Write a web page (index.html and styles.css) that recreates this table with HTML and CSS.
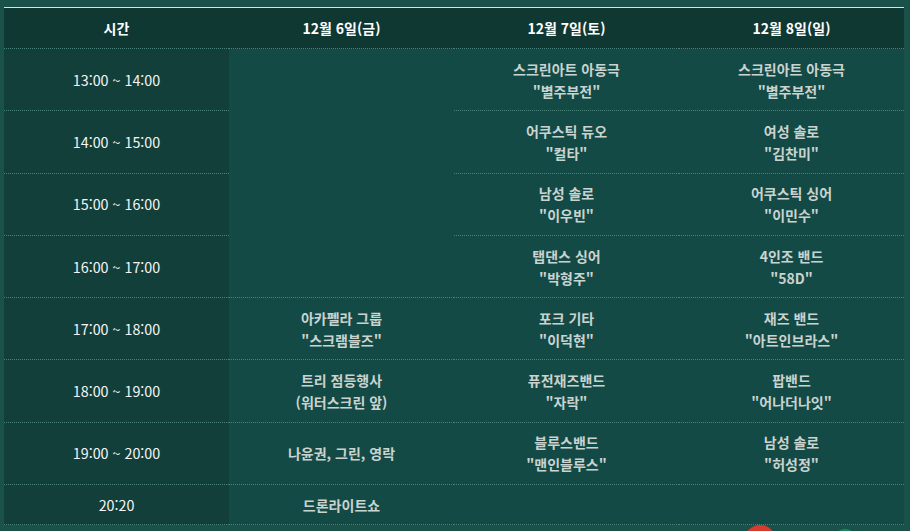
FILE: index.html
```html
<!DOCTYPE html>
<html lang="ko">
<head>
<meta charset="utf-8">
<link rel="stylesheet" href="styles.css">
</head>
<body>
<div class="page">
  <table class="schedule">
    <thead>
      <tr>
        <th>시간</th>
        <th>12월 6일(금)</th>
        <th>12월 7일(토)</th>
        <th>12월 8일(일)</th>
      </tr>
    </thead>
    <tbody>
      <tr>
        <td class="time">13:00 ~ 14:00</td>
        <td class="span" rowspan="4"></td>
        <td>스크린아트 아동극<br>"별주부전"</td>
        <td>스크린아트 아동극<br>"별주부전"</td>
      </tr>
      <tr>
        <td class="time">14:00 ~ 15:00</td>
        <td>어쿠스틱 듀오<br>"컬타"</td>
        <td>여성 솔로<br>"김찬미"</td>
      </tr>
      <tr>
        <td class="time">15:00 ~ 16:00</td>
        <td>남성 솔로<br>"이우빈"</td>
        <td>어쿠스틱 싱어<br>"이민수"</td>
      </tr>
      <tr>
        <td class="time">16:00 ~ 17:00</td>
        <td>탭댄스 싱어<br>"박형주"</td>
        <td>4인조 밴드<br>"58D"</td>
      </tr>
      <tr>
        <td class="time">17:00 ~ 18:00</td>
        <td>아카펠라 그룹<br>"스크램블즈"</td>
        <td>포크 기타<br>"이덕현"</td>
        <td>재즈 밴드<br>"아트인브라스"</td>
      </tr>
      <tr>
        <td class="time">18:00 ~ 19:00</td>
        <td>트리 점등행사<br>(워터스크린 앞)</td>
        <td>퓨전재즈밴드<br>"자락"</td>
        <td>팝밴드<br>"어나더나잇"</td>
      </tr>
      <tr>
        <td class="time">19:00 ~ 20:00</td>
        <td>나윤권, 그린, 영락</td>
        <td>블루스밴드<br>"맨인블루스"</td>
        <td>남성 솔로<br>"허성정"</td>
      </tr>
      <tr class="last">
        <td class="time">20:20</td>
        <td>드론라이트쇼</td>
        <td></td>
        <td></td>
      </tr>
    </tbody>
  </table>
  <span class="fab fab-red"></span>
  <span class="fab fab-green"></span>
</div>
</body>
</html>
```
FILE: styles.css
```css
html, body {
  margin: 0;
  padding: 0;
  background: #1a5149;
  height: 100%;
  overflow: hidden;
}
.page {
  position: relative;
  padding: 7px 6px 0 4px;
  height: 531px;
  box-sizing: border-box;
}
.schedule {
  width: 900px;
  border-collapse: collapse;
  table-layout: fixed;
  border-top: 1px solid #f2e3a4;
  font-family: "Noto Sans CJK KR", "Noto Sans", sans-serif;
  font-size: 14px;
}
.schedule th {
  height: 41px;
  padding: 0;
  background: #103833;
  color: #ffffff;
  font-weight: 700;
  text-align: center;
  border-bottom: 1px dotted #4b8279;
  box-sizing: border-box;
}
.schedule td {
  height: 62.3px;
  padding: 0;
  background: #144a45;
  color: #c9d3d0;
  font-weight: 700;
  text-align: center;
  line-height: 22px;
  border-bottom: 1px dotted #4b8279;
  box-sizing: border-box;
}
.schedule td.time {
  background: #133f3b;
  color: #f5f5f5;
  font-weight: 400;
  font-size: 14.3px;
}
.schedule tr.last td {
  height: 40px;
}
.fab {
  position: absolute;
  border-radius: 50%;
}
.fab-red {
  left: 744px;
  top: 525px;
  width: 32px;
  height: 32px;
  background: #d93a2e;
}
.fab-green {
  left: 833px;
  top: 529px;
  width: 24px;
  height: 24px;
  background: #1a8a5a;
}
```
